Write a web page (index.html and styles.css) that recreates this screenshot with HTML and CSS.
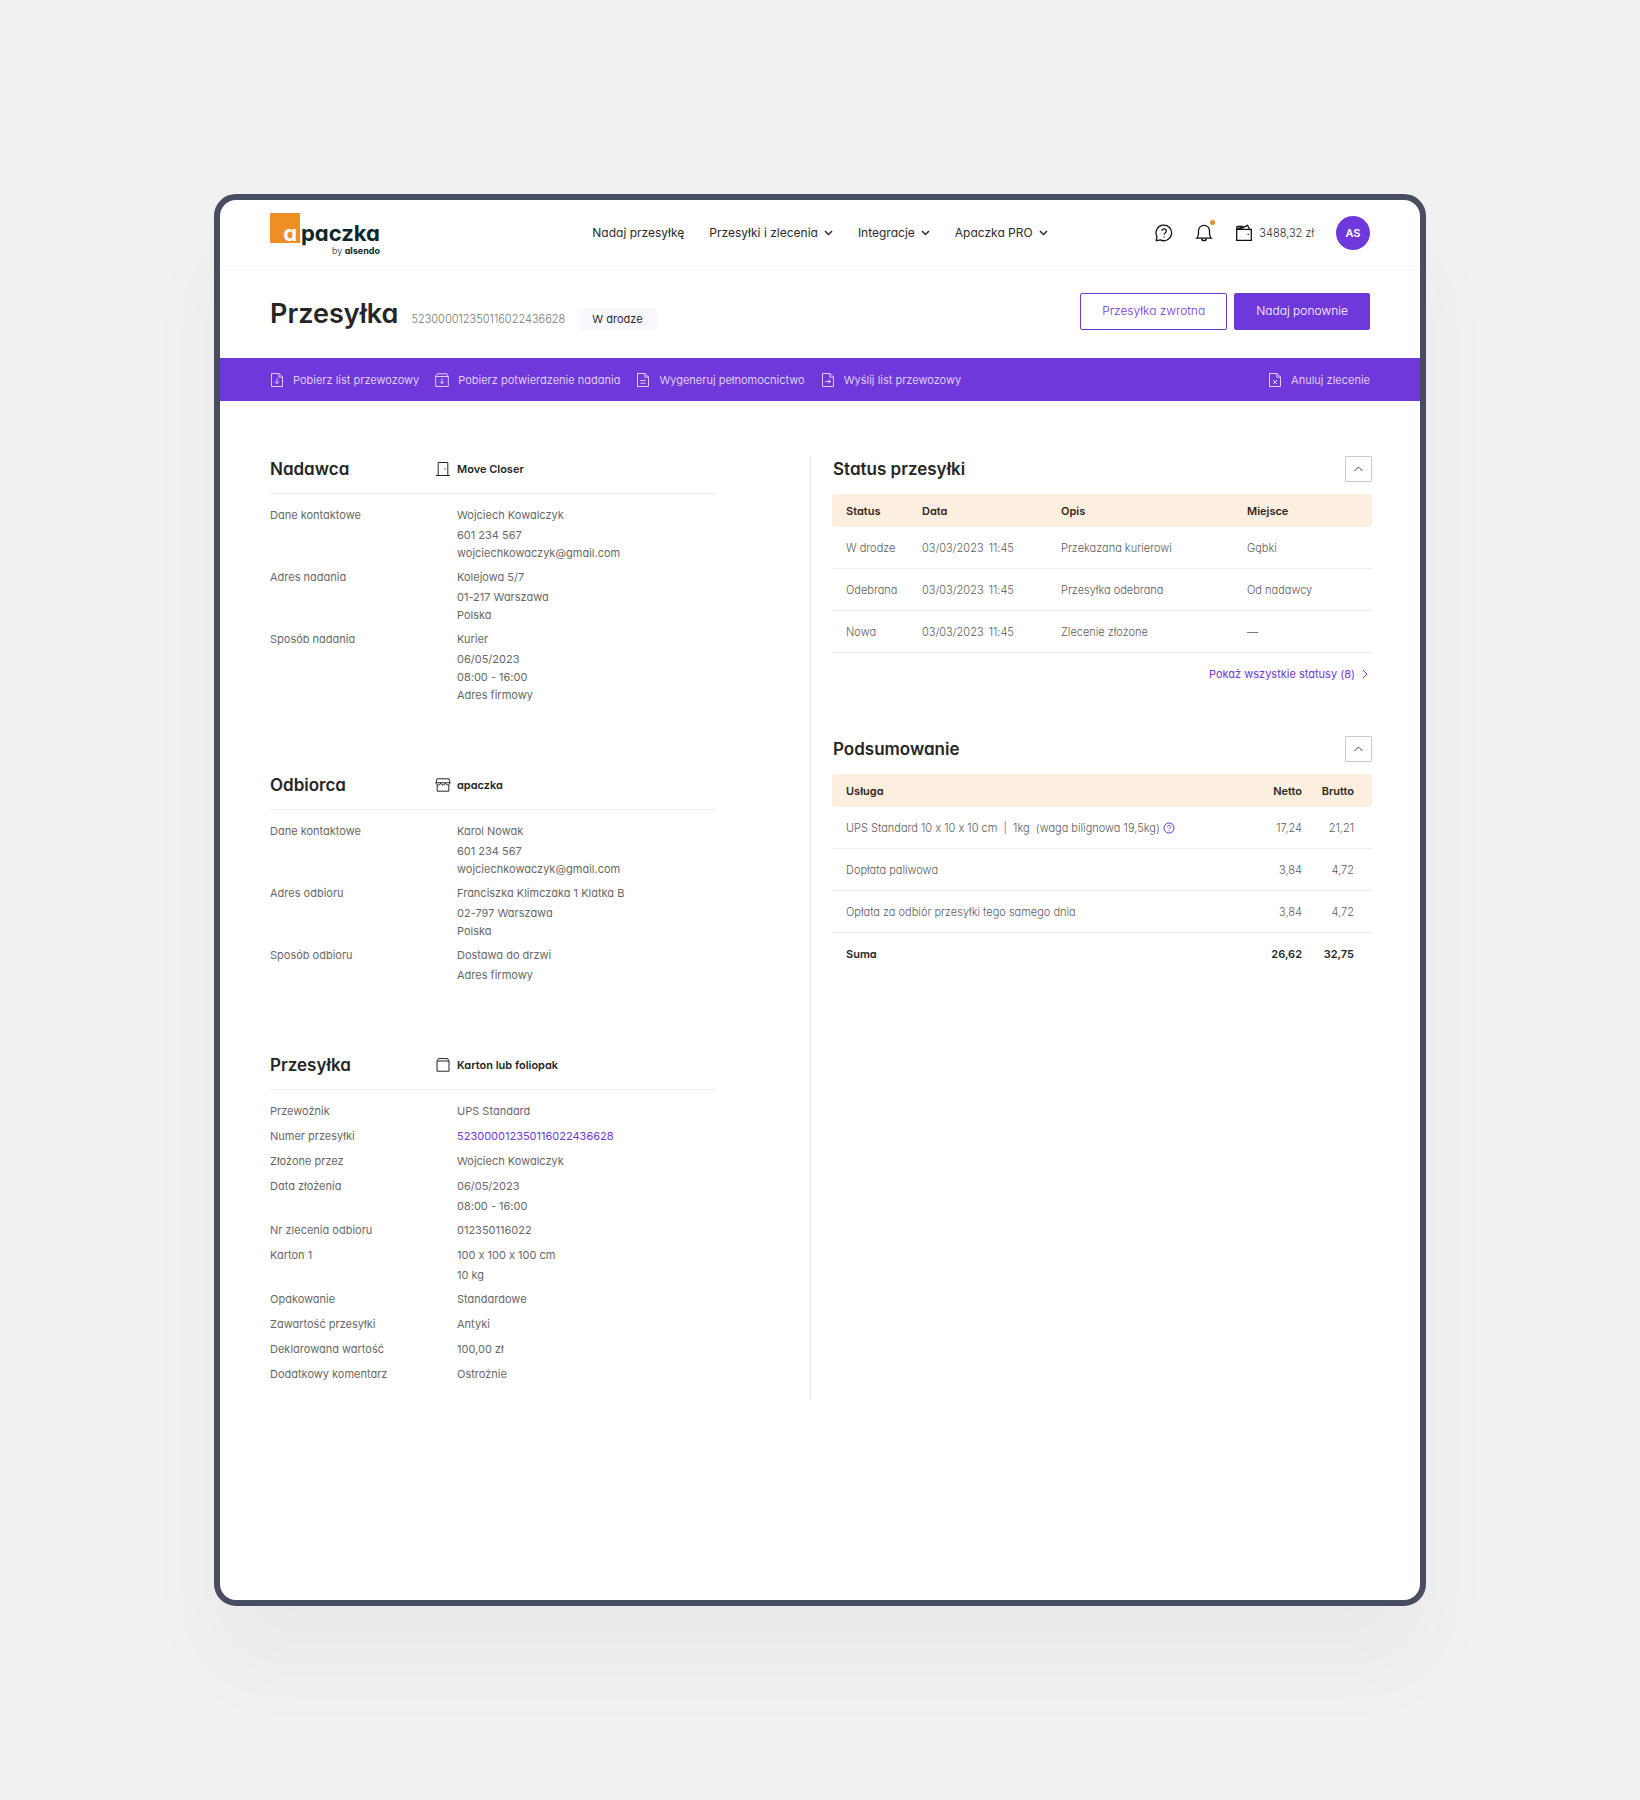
FILE: index.html
```html
<!DOCTYPE html>
<html lang="pl">
<head>
    <meta charset="UTF-8">
    <meta name="viewport" content="width=device-width, initial-scale=1.0">
    <title>Przesyłka - apaczka</title>
    <link rel="stylesheet" href="styles.css">
</head>
<body>
    <div class="window">
        <!-- Nagłówek -->
        <header class="header">
            <a href="#" class="logo">
                <span class="logo-name"><span class="logo-box">a</span>paczka</span>
                <span class="logo-by">by <b>alsendo</b></span>
            </a>
            <nav class="nav">
                <a href="#">Nadaj przesyłkę</a>
                <a href="#">Przesyłki i zlecenia <svg width="9" height="6" viewBox="0 0 9 6"><path d="M1 1l3.5 3.5L8 1"/></svg></a>
                <a href="#">Integracje <svg width="9" height="6" viewBox="0 0 9 6"><path d="M1 1l3.5 3.5L8 1"/></svg></a>
                <a href="#">Apaczka PRO <svg width="9" height="6" viewBox="0 0 9 6"><path d="M1 1l3.5 3.5L8 1"/></svg></a>
            </nav>
            <div class="user">
                <button class="icon-button" aria-label="Pomoc">
                    <svg width="18" height="18" viewBox="0 0 18 18"><path d="M1.3 16.7l.6-4.2A7.8 7.8 0 1 1 5.4 15.9z"/><path d="M6.9 7.1a2.2 2.2 0 1 1 3.3 1.9c-.8.4-1.1.8-1.1 1.7"/><path d="M9.1 12.6v.9"/></svg>
                </button>
                <button class="icon-button" aria-label="Powiadomienia">
                    <svg width="18" height="18" viewBox="0 0 18 18"><path d="M1.8 14.2h14.4c-1.3-1.2-1.7-2.6-1.7-4.6V6.8a5.5 5.5 0 0 0-11 0v2.8c0 2-.4 3.4-1.7 4.6z"/><path d="M6.6 14.4c.3 3 4.5 3 4.8 0"/></svg>
                    <span class="dot"></span>
                </button>
                <a href="#" class="wallet">
                    <svg width="18" height="18" viewBox="0 0 18 18"><path d="M1.7 5.3h14.6v11H1.7z"/><path d="M1.7 5.3V3.6c0-.8.5-1.3 1.3-1.3h5.2"/><path d="M4.6 5.2l8-3.9 2 3.9M2.4 4.4l6.4-.9"/><path d="M12.6 10.4h1.2"/></svg>
                    3488,32 zł
                </a>
                <button class="avatar">AS</button>
            </div>
        </header>

        <!-- Tytuł i przyciski -->
        <div class="title-row">
            <div class="title">
                <h1>Przesyłka</h1>
                <span class="number">523000012350116022436628</span>
                <span class="badge">W drodze</span>
            </div>
            <div class="buttons">
                <button class="btn">Przesyłka zwrotna</button>
                <button class="btn btn-primary">Nadaj ponownie</button>
            </div>
        </div>

        <!-- Pasek akcji -->
        <div class="actions">
            <a href="#"><svg width="14" height="16" viewBox="0 0 14 16"><path d="M1.5 1.5H9L12.5 5v9.5h-11z"/><path d="M8.8 1.5v3.7h3.7M7 6.5v5M5 9.7l2 2 2-2"/></svg>Pobierz list przewozowy</a>
            <a href="#"><svg width="14" height="16" viewBox="0 0 14 16"><path d="M.7 4.5h12.600v10H.7zM.7 4.5l1.500-2.700h9.600l1.500 2.700M7 6.5v5M5 9.7l2 2 2-2"/></svg>Pobierz potwierdzenie nadania</a>
            <a href="#"><svg width="14" height="16" viewBox="0 0 14 16"><path d="M1.5 1.5H9L12.5 5v9.5h-11z"/><path d="M8.8 1.5v3.7h3.7M4.3 8.5h5.4M4.3 11.2h5.4"/></svg>Wygeneruj pełnomocnictwo</a>
            <a href="#"><svg width="14" height="16" viewBox="0 0 14 16"><path d="M1.5 1.5H9L12.5 5v9.5h-11z"/><path d="M8.8 1.5v3.7h3.7M4.3 9.5h5M7.6 7.6l2 1.9-2 1.9"/></svg>Wyślij list przewozowy</a>
            <a href="#" class="cancel"><svg width="14" height="16" viewBox="0 0 14 16"><path d="M1.5 1.5H9L12.5 5v9.5h-11z"/><path d="M8.8 1.5v3.7h3.7M5 8l4 4M9 8l-4 4"/></svg>Anuluj zlecenie</a>
        </div>

        <main class="content">
            <div class="details">
                <!-- Nadawca -->
                <section>
                    <div class="section-head">
                        <h2>Nadawca</h2>
                        <p class="who"><svg width="18" height="18" viewBox="0 0 18 18"><path d="M2 15.5h14M4.2 15.5v-13h9.6v13"/><path d="M11 8.3v1.4"/></svg>Move Closer</p>
                    </div>
                    <dl>
                        <dt>Dane kontaktowe</dt>
                        <dd>Wojciech Kowalczyk<div class="more">601 234 567<br>wojciechkowaczyk@gmail.com</div></dd>
                        <dt>Adres nadania</dt>
                        <dd>Kolejowa 5/7<div class="more">01-217 Warszawa<br>Polska</div></dd>
                        <dt>Sposób nadania</dt>
                        <dd>Kurier<div class="more">06/05/2023<br>08:00 - 16:00<br>Adres firmowy</div></dd>
                    </dl>
                </section>

                <!-- Odbiorca -->
                <section>
                    <div class="section-head">
                        <h2>Odbiorca</h2>
                        <p class="who"><svg width="18" height="18" viewBox="0 0 18 18"><path d="M3 2.8h12l1 4H2zM3.2 9v6.2h11.6V9"/><path d="M2 6.8c0 2.9 4.6 2.9 4.6 0 0 2.9 4.8 2.9 4.8 0 0 2.9 4.6 2.9 4.6 0"/></svg>apaczka</p>
                    </div>
                    <dl>
                        <dt>Dane kontaktowe</dt>
                        <dd>Karol Nowak<div class="more">601 234 567<br>wojciechkowaczyk@gmail.com</div></dd>
                        <dt>Adres odbioru</dt>
                        <dd>Franciszka Klimczaka 1 Klatka B<div class="more">02-797 Warszawa<br>Polska</div></dd>
                        <dt>Sposób odbioru</dt>
                        <dd>Dostawa do drzwi<div class="more">Adres firmowy</div></dd>
                    </dl>
                </section>

                <!-- Przesyłka -->
                <section>
                    <div class="section-head">
                        <h2>Przesyłka</h2>
                        <p class="who"><svg width="18" height="18" viewBox="0 0 18 18"><path d="M3 5h12v10.2H3zM3 5l1.5-2.4h9L15 5"/></svg>Karton lub foliopak</p>
                    </div>
                    <dl>
                        <dt>Przewoźnik</dt>
                        <dd>UPS Standard</dd>
                        <dt>Numer przesyłki</dt>
                        <dd><a href="#">523000012350116022436628</a></dd>
                        <dt>Złożone przez</dt>
                        <dd>Wojciech Kowalczyk</dd>
                        <dt>Data złożenia</dt>
                        <dd>06/05/2023<div class="more">08:00 - 16:00</div></dd>
                        <dt>Nr zlecenia odbioru</dt>
                        <dd>012350116022</dd>
                        <dt>Karton 1</dt>
                        <dd>100 x 100 x 100 cm<div class="more">10 kg</div></dd>
                        <dt>Opakowanie</dt>
                        <dd>Standardowe</dd>
                        <dt>Zawartość przesyłki</dt>
                        <dd>Antyki</dd>
                        <dt>Deklarowana wartość</dt>
                        <dd>100,00 zł</dd>
                        <dt>Dodatkowy komentarz</dt>
                        <dd>Ostrożnie</dd>
                    </dl>
                </section>
            </div>

            <div class="side">
                <!-- Status przesyłki -->
                <section>
                    <div class="side-head">
                        <h2>Status przesyłki</h2>
                        <button class="toggle" aria-label="Zwiń status"><svg width="9" height="6" viewBox="0 0 9 6"><path d="M.5 5l4-4 4 4"/></svg></button>
                    </div>
                    <table class="status">
                        <thead>
                            <tr><th>Status</th><th>Data</th><th>Opis</th><th>Miejsce</th></tr>
                        </thead>
                        <tbody>
                            <tr><td>W drodze</td><td>03/03/2023 <span class="time">11:45</span></td><td>Przekazana kurierowi</td><td>Gąbki</td></tr>
                            <tr><td>Odebrana</td><td>03/03/2023 <span class="time">11:45</span></td><td>Przesyłka odebrana</td><td>Od nadawcy</td></tr>
                            <tr><td>Nowa</td><td>03/03/2023 <span class="time">11:45</span></td><td>Zlecenie złożone</td><td>—</td></tr>
                        </tbody>
                    </table>
                    <a href="#" class="show-all">Pokaż wszystkie statusy (8) <svg width="6" height="10" viewBox="0 0 6 10"><path d="M1 1l4 4-4 4"/></svg></a>
                </section>

                <!-- Podsumowanie -->
                <section>
                    <div class="side-head">
                        <h2>Podsumowanie</h2>
                        <button class="toggle" aria-label="Zwiń podsumowanie"><svg width="9" height="6" viewBox="0 0 9 6"><path d="M.5 5l4-4 4 4"/></svg></button>
                    </div>
                    <table class="summary">
                        <thead>
                            <tr><th>Usługa</th><th>Netto</th><th>Brutto</th></tr>
                        </thead>
                        <tbody>
                            <tr>
                                <td>UPS Standard 10 x 10 x 10 cm &nbsp;|&nbsp; 1kg &nbsp;(waga bilignowa 19,5kg) <svg class="hint" width="12" height="12" viewBox="0 0 12 12"><circle cx="6" cy="6" r="5"/><path d="M4.5 4.9a1.5 1.5 0 1 1 2.2 1.3c-.5.3-.7.5-.7 1M6 8.3v.8"/></svg></td>
                                <td>17,24</td><td>21,21</td>
                            </tr>
                            <tr><td>Dopłata paliwowa</td><td>3,84</td><td>4,72</td></tr>
                            <tr><td>Opłata za odbiór przesyłki tego samego dnia</td><td>3,84</td><td>4,72</td></tr>
                        </tbody>
                        <tfoot>
                            <tr><td>Suma</td><td>26,62</td><td>32,75</td></tr>
                        </tfoot>
                    </table>
                </section>
            </div>
        </main>
    </div>
</body>
</html>
```
FILE: styles.css
```css
* {
    box-sizing: border-box;
}
body {
    margin: 0;
    padding: 194px 214px;
    background-color: #f1f1f1;
    font-family: Inter, sans-serif;
    font-feature-settings: "cv11", "calt" 0;
    font-size: 11px;
    font-weight: 300;
    line-height: 22px;
    color: #5c5c5c;
}
h1, h2, p, dl, dd {
    margin: 0;
}
h1, h2 {
    color: #262626;
    font-weight: 600;
}
a {
    color: #6f38db;
    text-decoration: none;
}
button {
    font: inherit;
    font-feature-settings: inherit;
    padding: 0;
    cursor: pointer;
}
svg {
    fill: none;
    stroke: currentColor;
    flex-shrink: 0;
}
.window {
    border: 6px solid #494d62;
    border-radius: 22px;
    background-color: #fff;
    box-shadow: 0 60px 80px rgba(73, 77, 98, 0.04);
    overflow: hidden;
}

/* Nagłówek */
.header {
    display: grid;
    grid-template-columns: 1fr auto 1fr;
    align-items: center;
    height: 66px;
    padding: 0 50px;
    border-bottom: 1px solid #f3f3f3;
}
.logo {
    justify-self: start;
    display: flex;
    flex-direction: column;
    padding-top: 6px;
    color: #0b2727;
}
.logo-name {
    display: flex;
    gap: 1px;
    font-size: 22px;
    font-weight: 700;
    line-height: 40px;
    height: 30px;
}
.logo-box {
    width: 30px;
    background-color: #ee8f24;
    color: #fff;
    text-align: right;
    padding-right: 3px;
}
.logo-by {
    font-size: 9px;
    line-height: 15px;
    text-align: right;
}
.logo-by b {
    font-weight: 700;
}
.nav {
    display: flex;
    gap: 25px;
    font-size: 12px;
    font-weight: 400;
}
.nav a {
    display: flex;
    align-items: center;
    gap: 6px;
    color: #2b2b2b;
}
.nav svg {
    stroke-width: 1.5;
}
.user {
    justify-self: end;
    display: flex;
    align-items: center;
    gap: 22px;
}
.icon-button {
    position: relative;
    height: 18px;
    border: none;
    background: none;
    color: #111;
}
.icon-button svg {
    display: block;
    stroke-width: 1.3;
}
.dot {
    position: absolute;
    top: -4px;
    right: -2px;
    width: 5px;
    height: 5px;
    border-radius: 50%;
    background-color: #e5902e;
}
.wallet {
    display: flex;
    align-items: center;
    gap: 6px;
    color: #2b2b2b;
}
.wallet svg {
    color: #111;
    stroke-width: 1.3;
}
.avatar {
    width: 34px;
    height: 34px;
    border: none;
    border-radius: 50%;
    background-color: #6f38db;
    color: #fff;
    font-weight: 600;
}

/* Tytuł */
.title-row {
    display: flex;
    justify-content: space-between;
    align-items: center;
    height: 92px;
    padding: 0 50px;
}
.title {
    display: flex;
    align-items: baseline;
    gap: 13px;
    padding-top: 4px;
}
.title h1 {
    font-size: 27px;
    line-height: 40px;
}
.number {
    color: #777;
}
.badge {
    padding: 0 14px;
    border-radius: 3px;
    background-color: #f9f8fe;
    color: #2b2b2b;
    font-weight: 400;
}
.buttons {
    display: flex;
    gap: 7px;
    padding-bottom: 2px;
}
.btn {
    height: 37px;
    padding: 0 21px;
    border: 1px solid #6f38db;
    border-radius: 2px;
    background-color: #fff;
    color: #6f38db;
    font-size: 12px;
}
.btn-primary {
    background-color: #6f38db;
    color: #fff;
}

/* Pasek akcji */
.actions {
    display: flex;
    gap: 16px;
    height: 43px;
    padding: 0 50px;
    background-color: #6f38db;
    font-weight: 400;
}
.actions a {
    display: flex;
    align-items: center;
    gap: 9px;
    color: #dfcdf8;
}
.actions .cancel {
    margin-left: auto;
}

/* Treść */
.content {
    display: flex;
    justify-content: space-between;
    padding: 55px 48px 200px 50px;
}
.details {
    flex-basis: 446px;
    padding-bottom: 15px;
}
.details section + section {
    margin-top: 67px;
}
.section-head {
    display: grid;
    grid-template-columns: 164px 1fr;
    height: 38px;
    border-bottom: 1px solid #ededed;
}
h2 {
    font-size: 17px;
    line-height: 26px;
}
.who {
    display: flex;
    align-items: center;
    gap: 5px;
    height: 26px;
    color: #262626;
    font-weight: 600;
}
dl {
    display: grid;
    grid-template-columns: 187px 1fr;
    row-gap: 3px;
    padding-top: 10px;
    color: #686868;
    font-weight: 400;
}
.more {
    line-height: 18px;
    padding-bottom: 1px;
}
.side {
    flex-basis: 562px;
    padding-left: 21px;
    border-left: 1px solid #ececec;
}
.side section + section {
    margin-top: 51px;
}
.side-head {
    display: flex;
    justify-content: space-between;
    align-items: flex-start;
    height: 38px;
    padding-left: 1px;
}
.toggle {
    display: flex;
    align-items: center;
    justify-content: center;
    width: 27px;
    height: 26px;
    border: 1px solid #c9c9c9;
    border-radius: 1px;
    background-color: #fff;
    color: #444;
}
table {
    width: 100%;
    table-layout: fixed;
    border-spacing: 0;
    line-height: 18px;
}
th, td {
    padding: 0;
    text-align: left;
}
th {
    height: 33px;
    background-color: #fdefe0;
    color: #33261b;
    font-weight: 600;
}
td {
    height: 42px;
    border-bottom: 1px solid #ededed;
}
th:first-child {
    border-radius: 3px 0 0 3px;
}
th:last-child {
    border-radius: 0 3px 3px 0;
}
th:first-child, td:first-child {
    padding-left: 14px;
}
.status th:nth-child(1) {
    width: 90px;
}
.status th:nth-child(2) {
    width: 139px;
}
.status th:nth-child(3) {
    width: 186px;
}
.time {
    margin-left: 2px;
}
.show-all {
    display: flex;
    align-items: center;
    justify-content: flex-end;
    gap: 7px;
    padding: 10px 4px 0 0;
    font-weight: 400;
}
.summary th:nth-child(2) {
    width: 60px;
}
.summary th:nth-child(3) {
    width: 70px;
}
.summary th:nth-child(n+2), .summary td:nth-child(n+2) {
    text-align: right;
}
.summary th:last-child, .summary td:last-child {
    padding-right: 18px;
}
.summary tfoot td {
    border-bottom: none;
    color: #262626;
    font-weight: 600;
}
.hint {
    color: #6f38db;
    vertical-align: -2px;
}
```
